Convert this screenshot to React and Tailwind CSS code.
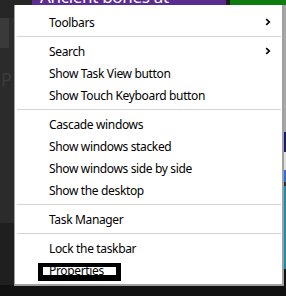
import React from "react";

const Chevron = () => (
  <svg width="6" height="8" viewBox="0 0 6 8" className="block">
    <path d="M1.2 1.2 L4.3 4 L1.2 6.8" fill="none" stroke="#000" strokeWidth="1.6" />
  </svg>
);

const Item = ({ label, arrow }) => (
  <div className="h-[22px] flex items-center pl-[34px] pr-[11px]">
    <span className="flex-1 text-[12px] leading-none text-black tracking-[-0.35px] pt-[2px]">{label}</span>
    {arrow && <Chevron />}
  </div>
);

const Sep = () => (
  <div className="h-[7px] flex items-center pl-[2px] pr-[1px]">
    <div className="h-px w-full bg-[#d4d4d4]" />
  </div>
);

export default function App() {
  return (
    <div
      className="relative w-[286px] h-[296px] overflow-hidden bg-[#2b2b2b] flex flex-col"
      style={{ fontFamily: '"Noto Sans", "Open Sans", sans-serif' }}
    >
      {/* top strip */}
      <div className="h-[5px] flex shrink-0">
        <div className="w-[32px] bg-[#262626]" />
        <div className="w-[194px] bg-[#5c2d91] overflow-hidden relative">
          <div className="absolute left-[8px] top-[-12px] text-[17px] leading-none text-white whitespace-nowrap tracking-[-0.3px]">
            Ancient bones at
          </div>
        </div>
        <div className="w-[4px] bg-[#1e1e1e]" />
        <div className="flex-1 bg-[#107c10]" />
      </div>
      {/* middle */}
      <div className="flex-1 flex">
        <div className="w-[14px] flex flex-col">
          <div className="h-[13px] bg-[#262626]" />
          <div className="h-[30px] flex">
            <div className="w-[9px] bg-[#3a3a3a]" />
            <div className="flex-1 bg-[#2b2b2b]" />
          </div>
          <div className="h-[175px] bg-[#2b2b2b] text-[#3c3c3c] text-[18px] pt-[22px] pl-[1px] leading-none overflow-hidden">
            P
          </div>
          <div className="flex-1 bg-[#1f1f1f]" />
        </div>
        <div className="flex-1" />
        <div className="w-[2px] flex flex-col">
          <div className="h-[127px] bg-[#a8a8a8]" />
          <div className="h-[20px] bg-[#1a1a6e]" />
          <div className="h-[18px] bg-[#e0e0e0]" />
          <div className="h-[12px] bg-[#2b6fd6]" />
          <div className="h-[4px] bg-[#333]" />
          <div className="h-[83px] bg-[#1e8ea8]" />
          <div className="flex-1 bg-[#111]" />
        </div>
      </div>
      <div className="h-[11px] bg-[#111] shrink-0" />

      {/* context menu */}
      <div className="absolute left-[14px] top-[5px] w-[270px] h-[281px] bg-white border-l border-r-2 border-b-2 border-[#a0a0a0] pt-[6px] flex flex-col">
        <Item label="Toolbars" arrow />
        <Sep />
        <Item label="Search" arrow />
        <Item label="Show Task View button" />
        <Item label="Show Touch Keyboard button" />
        <Sep />
        <Item label="Cascade windows" />
        <Item label="Show windows stacked" />
        <Item label="Show windows side by side" />
        <Item label="Show the desktop" />
        <Sep />
        <Item label="Task Manager" />
        <Sep />
        <Item label="Lock the taskbar" />
        <div className="relative">
          <Item label="Properties" />
          <div className="absolute left-[23px] top-[4px] w-[83px] h-[18px] border-black border-t-4 border-l-[5px] border-r-[5px] border-b-[6px]" />
        </div>
      </div>
    </div>
  );
}
